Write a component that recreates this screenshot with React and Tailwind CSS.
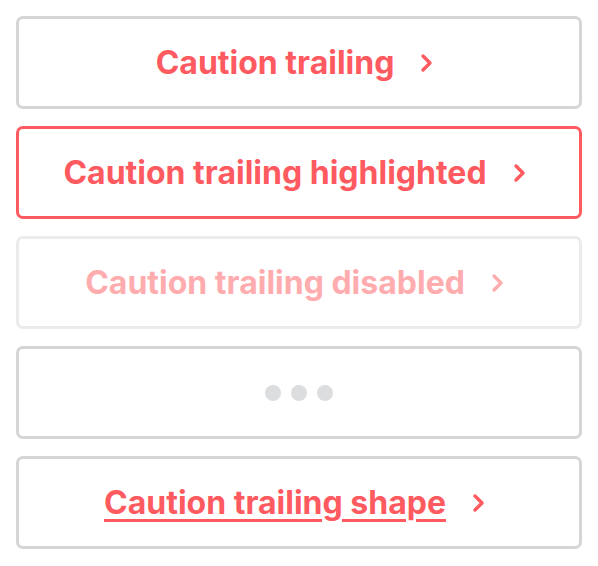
import React from "react";

const Chevron = ({ className }) => (
  <svg width="14" height="20" viewBox="0 0 14 20" className={className} fill="none">
    <path d="M3 3l7 7-7 7" stroke="currentColor" strokeWidth="3.4" strokeLinecap="round" strokeLinejoin="round" />
  </svg>
);

const Btn = ({ children, border, text, underline }) => (
  <div className={`h-[93px] rounded-[7px] border-[3px] ${border} flex items-center justify-center`}>
    <span className={`flex items-center ${text}`}>
      <span className={`text-[32px] leading-[40px] font-bold ${underline ? "underline decoration-[3px] underline-offset-[5px]" : ""}`}>{children}</span>
      <Chevron className="ml-[26px] mr-[8px]" />
    </span>
  </div>
);

export default function App() {
  return (
    <div className="w-[598px] h-[566px] bg-white px-[16px] pt-[16px] flex flex-col gap-[17px]" style={{ fontFamily: "Inter, 'Liberation Sans', sans-serif" }}>
      <Btn border="border-[#d4d5d6]" text="text-[#ff5a5f]">Caution trailing</Btn>
      <Btn border="border-[#ff5a5f]" text="text-[#ff5a5f]">Caution trailing highlighted</Btn>
      <Btn border="border-[#eaebec]" text="text-[#ffacaf]">Caution trailing disabled</Btn>
      <div className="h-[93px] rounded-[7px] border-[3px] border-[#d4d5d6] flex items-center justify-center gap-[10px]">
        <span className="w-[16px] h-[16px] rounded-full bg-[#dcdddf]" />
        <span className="w-[16px] h-[16px] rounded-full bg-[#dcdddf]" />
        <span className="w-[16px] h-[16px] rounded-full bg-[#dcdddf]" />
      </div>
      <Btn border="border-[#d4d5d6]" text="text-[#ff5a5f]" underline>Caution trailing shape</Btn>
    </div>
  );
}
